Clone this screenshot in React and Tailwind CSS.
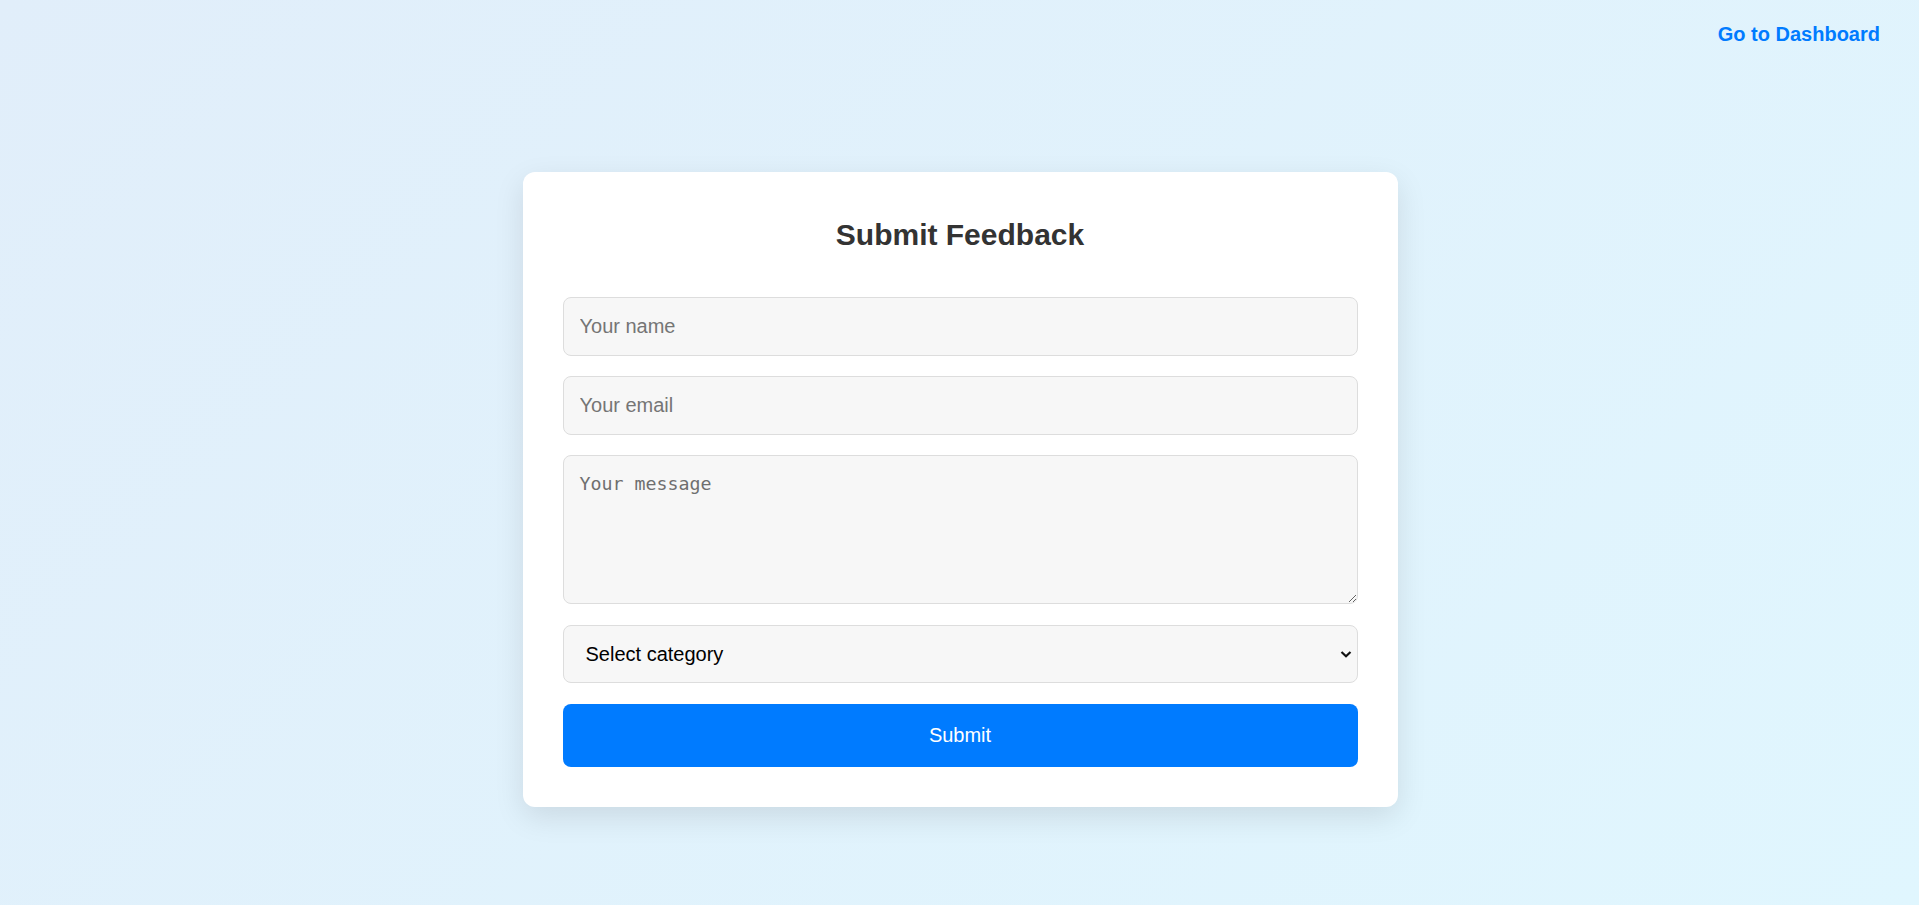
export default function App() {
    const field =
        'w-full h-[58.5px] px-4 bg-[#f7f7f7] border border-[#ddd] rounded-[8px] text-[20px] text-black outline-none placeholder:text-[#757575]';

    return (
        <div className="min-h-screen w-full flex flex-col bg-[linear-gradient(135deg,#e1eefa,#e0f6fe)] font-['Liberation_Sans',Arial,sans-serif]">
            <div className="flex justify-end pr-[39px] pt-[23px]">
                <a href="#" className="text-[20px] leading-[23px] font-bold text-[#007bff]">
                    Go to Dashboard
                </a>
            </div>

            <div className="flex justify-center pl-px mt-[126px] mb-[60px]">
                <div className="w-[875px] bg-white rounded-[12px] px-[40px] pt-[45px] pb-[40px] shadow-[0_10px_30px_rgba(0,0,0,0.1)]">
                    <h2 className="text-center text-[30px] leading-[36px] font-bold text-[#333] mb-[44px]">
                        Submit Feedback
                    </h2>

                    <form className="flex flex-col gap-[20.5px]" onSubmit={(e) => e.preventDefault()}>
                        <input type="text" placeholder="Your name" className={field} />
                        <input type="email" placeholder="Your email" className={field} />
                        <textarea
                            placeholder="Your message"
                            className="w-full h-[149px] px-4 pt-[17px] bg-[#f7f7f7] border border-[#ddd] rounded-[8px] text-[18.3px] leading-[21px] font-['DejaVu_Sans_Mono',monospace] outline-none placeholder:text-[#6f6f6f]"
                        />
                        <div className="relative">
                            <select
                                defaultValue=""
                                className="w-full h-[58.5px] pl-[22px] pr-10 appearance-none bg-[#f7f7f7] border border-[#ddd] rounded-[8px] text-[20px] text-black outline-none"
                            >
                                <option value="">Select category</option>
                                <option value="bug">Bug</option>
                                <option value="feature">Feature request</option>
                                <option value="general">General</option>
                            </select>
                            <svg
                                className="absolute right-[6px] top-1/2 -translate-y-1/2 pointer-events-none"
                                width="12"
                                height="8"
                                viewBox="0 0 12 8"
                                fill="none"
                            >
                                <path d="M1.5 2l4.5 4.2L10.5 2" stroke="#111" strokeWidth="2.2" />
                            </svg>
                        </div>
                        <button
                            type="submit"
                            className="w-full h-[63px] bg-[#007bff] text-white text-[20px] rounded-[8px]"
                        >
                            Submit
                        </button>
                    </form>
                </div>
            </div>
        </div>
    );
}
